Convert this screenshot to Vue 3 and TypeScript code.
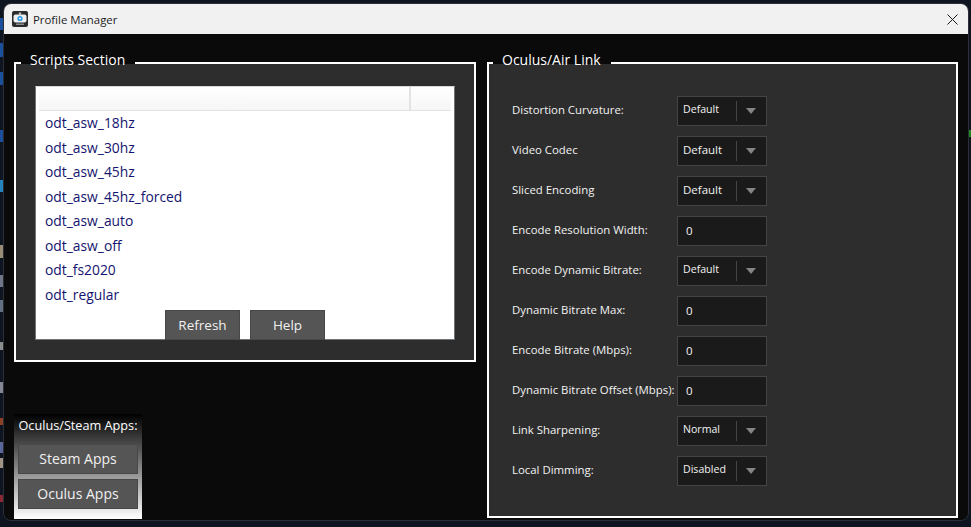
<script setup lang="ts">
interface Row {
  label: string
  kind: 'select' | 'input'
  value: string
  small?: boolean
}

const scripts = [
  'odt_asw_18hz',
  'odt_asw_30hz',
  'odt_asw_45hz',
  'odt_asw_45hz_forced',
  'odt_asw_auto',
  'odt_asw_off',
  'odt_fs2020',
  'odt_regular',
]

const rows: Row[] = [
  { label: 'Distortion Curvature:', kind: 'select', value: 'Default', small: true },
  { label: 'Video Codec', kind: 'select', value: 'Default' },
  { label: 'Sliced Encoding', kind: 'select', value: 'Default' },
  { label: 'Encode Resolution Width:', kind: 'input', value: '0' },
  { label: 'Encode Dynamic Bitrate:', kind: 'select', value: 'Default', small: true },
  { label: 'Dynamic Bitrate Max:', kind: 'input', value: '0' },
  { label: 'Encode Bitrate (Mbps):', kind: 'input', value: '0' },
  { label: 'Dynamic Bitrate Offset (Mbps):', kind: 'input', value: '0' },
  { label: 'Link Sharpening:', kind: 'select', value: 'Normal', small: true },
  { label: 'Local Dimming:', kind: 'select', value: 'Disabled', small: true },
]

// bits of the window behind that show down the left edge
const slivers = [
  { y: 18, h: 12, c: '#1a4f9c' },
  { y: 43, h: 14, c: '#1a4f9c' },
  { y: 72, h: 13, c: '#1a4f9c' },
  { y: 130, h: 12, c: '#1a4f9c' },
  { y: 180, h: 12, c: '#2383bd' },
  { y: 245, h: 13, c: '#9a8d75' },
  { y: 275, h: 12, c: '#6e7688' },
  { y: 300, h: 12, c: '#627082' },
  { y: 342, h: 8, c: '#8c8c8c' },
  { y: 382, h: 11, c: '#868694' },
  { y: 418, h: 7, c: '#8c4028' },
  { y: 442, h: 11, c: '#5a669a' },
  { y: 458, h: 10, c: '#a09488' },
  { y: 495, h: 7, c: '#8c2633' },
]
</script>

<template>
  <div class="desktop">
    <i
      v-for="s in slivers"
      :key="s.y"
      class="sliver"
      :style="{ top: s.y + 'px', height: s.h + 'px', background: s.c }"
    ></i>
    <i class="green"></i>
    <div class="window">
      <header class="titlebar">
        <svg class="app-icon" width="16" height="16" viewBox="0 0 16 16">
          <rect width="16" height="16" rx="2" fill="#2b2b2b" />
          <rect x="6.8" y="1.5" width="2.4" height="2" fill="#bfc4c8" />
          <rect x="1.5" y="3.5" width="13" height="8" rx="2" fill="#eceef0" />
          <circle cx="8" cy="7.5" r="2.6" fill="#2d9be0" />
          <circle cx="8" cy="7.5" r="1" fill="#e8f5fd" />
          <rect x="4" y="12.5" width="8" height="1.5" fill="#8a8e92" />
        </svg>
        <span class="title">Profile Manager</span>
        <svg class="close" width="11" height="11" viewBox="0 0 11 11">
          <path d="M.5.5l10 10M10.5.5l-10 10" stroke="#1a1a1a" stroke-width="1" fill="none" />
        </svg>
      </header>

      <main class="content">
        <div class="left">
          <section class="group scripts">
            <h2 class="legend">Scripts Section</h2>
            <div class="list">
              <div class="list-head">
                <span class="head-cell">Scripts</span>
                <span class="head-rest"></span>
              </div>
              <ul>
                <li v-for="s in scripts" :key="s">{{ s }}</li>
              </ul>
              <div class="list-actions">
                <button type="button" class="btn">Refresh</button>
                <button type="button" class="btn">Help</button>
              </div>
            </div>
          </section>

          <section class="apps">
            <p>Oculus/Steam Apps:</p>
            <button type="button" class="btn">Steam Apps</button>
            <button type="button" class="btn">Oculus Apps</button>
          </section>
        </div>

        <section class="group link">
          <h2 class="legend">Oculus/Air Link</h2>
          <div v-for="r in rows" :key="r.label" class="row">
            <label>{{ r.label }}</label>
            <div v-if="r.kind === 'select'" class="field select">
              <span class="val" :class="{ small: r.small }">{{ r.value }}</span>
              <i class="sep"></i>
              <i class="arrow"></i>
            </div>
            <div v-else class="field input">{{ r.value }}</div>
          </div>
        </section>
      </main>
    </div>
  </div>
</template>

<style>
html,
body {
  margin: 0;
  background: #0e1520;
  overflow: hidden;
}
</style>

<style scoped>
.desktop {
  position: relative;
  width: 971px;
  height: 527px;
  padding: 3px 2px 0 3px;
  box-sizing: border-box;
  font-family: "Open Sans", "Noto Sans", sans-serif;
}

.sliver {
  position: absolute;
  left: 0;
  width: 3px;
}

.green {
  position: absolute;
  right: 0;
  top: 130px;
  width: 2px;
  height: 7px;
  background: #1f8a1f;
}

.window {
  position: relative;
  height: 518px;
  box-sizing: border-box;
  border: 1px solid #2a2f36;
  background: #0a0a0a;
  border-radius: 8px;
  overflow: hidden;
  display: flex;
  flex-direction: column;
}

.titlebar {
  height: 30px;
  flex: none;
  background: #f1f1f1;
  display: flex;
  align-items: center;
  padding: 0 10px 0 8px;
}

.app-icon {
  margin-right: 5px;
}

.title {
  font-size: 11.4px;
  color: #1c1c1c;
  flex: 1;
}

.content {
  flex: 1;
  display: flex;
  padding: 28px 10px 2px 10px;
  gap: 11px;
}

.left {
  width: 462px;
  display: flex;
  flex-direction: column;
  justify-content: space-between;
}

.group {
  position: relative;
  box-sizing: border-box;
  border: 2px solid #fff;
  background: #2d2d2d;
}

.legend {
  position: absolute;
  top: -11px;
  left: 5px;
  margin: 0;
  padding: 0 10px 0 9px;
  height: 11px;
  background: #0a0a0a;
  color: #fff;
  font-size: 14px;
  font-weight: 400;
  line-height: 14px;
  white-space: nowrap;
}

.link .legend {
  left: 4px;
}

.scripts {
  height: 300px;
  padding: 22px 19px;
}

.list {
  height: 254px;
  box-sizing: border-box;
  border: 1px solid #6f7479;
  border-top-color: #d8d8d8;
  background: #fff;
  display: flex;
  flex-direction: column;
}

.list-head {
  height: 23px;
  flex: none;
  display: flex;
  background: linear-gradient(#fff, #f6f6f6);
  border-bottom: 1px solid #e3e3e3;
  margin: 0 3px;
}

.head-cell {
  width: 370px;
  border-right: 2px solid #e3e3e3;
  color: #fbfbfb;
  font-size: 12px;
  line-height: 22px;
  text-align: center;
}

.head-rest {
  flex: 1;
}

ul {
  list-style: none;
  margin: 0;
  padding: 0 0 0 9px;
}

li {
  height: 24.5px;
  line-height: 24px;
  font-size: 13.85px;
  color: #14146e;
}

.list-actions {
  margin-top: auto;
  display: flex;
  justify-content: center;
  gap: 10px;
  margin-bottom: -1px;
}

.btn {
  box-sizing: border-box;
  width: 75px;
  height: 30px;
  padding: 0;
  border: 1px solid #484848;
  background: #555;
  color: #f0f0f0;
  font-family: inherit;
  font-size: 13.5px;
}

.apps {
  width: 128px;
  height: 105px;
  margin-bottom: -1px;
  box-sizing: border-box;
  padding: 0 4px;
  background: linear-gradient(#000 0%, #a0a0a0 62%, #fff 100%);
  display: flex;
  flex-direction: column;
  color: #fff;
}

.apps p {
  margin: 0;
  height: 30px;
  line-height: 23px;
  font-size: 12.7px;
  text-align: center;
  white-space: nowrap;
}

.apps .btn {
  width: 120px;
  margin-bottom: 5px;
  padding-bottom: 2px;
  font-size: 14px;
}

.link {
  width: 471px;
  height: 456px;
  padding: 27px 0 0 23px;
}

.row {
  height: 40px;
  display: flex;
  align-items: center;
  justify-content: space-between;
  width: 255px;
}

.row label {
  color: #f2f2f2;
  font-size: 11.4px;
  white-space: nowrap;
  margin-top: -3px;
}

.field {
  width: 90px;
  height: 30px;
  box-sizing: border-box;
  border: 1px solid #444;
  background: #1a1a1a;
  color: #f2f2f2;
  font-size: 12px;
  display: flex;
  align-items: center;
  flex: none;
}

.input {
  padding: 0 0 2px 8px;
  font-size: 11.5px;
}

.select {
  padding-left: 5px;
}

.val {
  width: 53px;
  font-size: 11.5px;
  white-space: nowrap;
  margin-top: -3px;
}

.val.small {
  font-size: 10.6px;
  margin-top: -5px;
}

.sep {
  width: 1px;
  height: 20px;
  background: #444;
  flex: none;
}

.arrow {
  margin-left: 9px;
  width: 0;
  height: 0;
  border-left: 5px solid transparent;
  border-right: 5px solid transparent;
  border-top: 6px solid #858585;
}
</style>
